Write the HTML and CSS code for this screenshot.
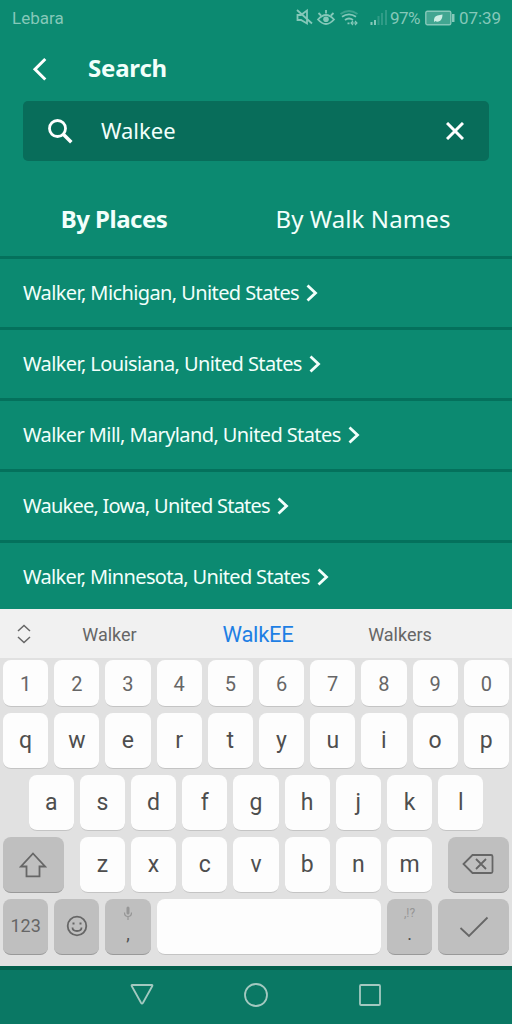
FILE: index.html
```html
<!DOCTYPE html>
<html lang="en">
<head>
<meta charset="utf-8">
<title>Search</title>
<link rel="stylesheet" href="styles.css">
</head>
<body>
<div class="screen">
  <header class="status">
    <span class="carrier">Lebara</span>
    <svg class="status-icons" width="92" height="20" viewBox="0 0 92 20" fill="none" stroke="currentColor" stroke-width="1.8">
      <path d="M1.500 7h3.500l6-4.500v13L5 12H1.500zM1 2l15 13.500"/>
      <path d="M22 11.500q8-9 16 0q-8 9-16 0zM22.500 5l2.500 2.500M30 2v3.500M37.500 5L35 7.500"/>
      <circle cx="30" cy="11.300" r="2.800" fill="currentColor" stroke="none"/>
      <path d="M44.500 6q8.500-6 17 0" opacity=".4"/>
      <path d="M46 8.800q7-5 14 0M49 12q4-3 8 0M51.500 15.300h2"/>
      <path d="M55 15h6m-4-2l-2 2 2 2m2-4l2 2-2 2" stroke-width="1.100"/>
      <path d="M75.500 17v-3M79 17v-5" stroke-width="2"/>
      <path d="M82.500 17V8M86 17V5M90 17V2" stroke-width="2" opacity=".3"/>
    </svg>
    <span class="percent">97%</span>
    <svg class="battery" width="30" height="16" viewBox="0 0 30 16">
      <rect x=".8" y="1.200" width="25" height="13.500" rx="1.500" fill="currentColor" fill-opacity=".45" stroke="currentColor" stroke-width="1.400"/>
      <path d="M27 4h2.500v8H27z" fill="currentColor"/>
      <path d="M9 11.500q-.5-5 3.500-6l5-1q0 6-4 7-2 .5-3-.5l-1.500 1z" fill="#cdeee4"/>
    </svg>
    <span class="clock">07:39</span>
  </header>

  <div class="title-bar">
    <svg width="16" height="24" viewBox="0 0 16 24"><path d="M13.300 2L3 12.300 13.300 22.500" fill="none" stroke="#fff" stroke-width="3"/></svg>
    <h1>Search</h1>
  </div>

  <div class="search-box">
    <svg width="26" height="26" viewBox="0 0 26 26" fill="none" stroke="#fff"><circle cx="10.500" cy="10.500" r="8" stroke-width="2.800"/><path d="M16.300 16.300l8 8" stroke-width="3.500"/></svg>
    <span class="query">Walkee</span>
    <svg width="18" height="18" viewBox="0 0 18 18"><path d="M1 1l16 16M17 1L1 17" stroke="#fff" stroke-width="3"/></svg>
  </div>

  <nav class="tabs">
    <span class="tab active"><b>By Places</b></span>
    <span class="tab"><span class="tab-text">By Walk Names</span></span>
  </nav>

  <main class="results">
    <div class="result"><span>Walker, Michigan, United States</span><svg class="go" viewBox="0 0 12 18"><path d="M1.500 1.500L9.500 9l-8 7.500"/></svg></div>
    <div class="result"><span>Walker, Louisiana, United States</span><svg class="go" viewBox="0 0 12 18"><path d="M1.500 1.500L9.500 9l-8 7.500"/></svg></div>
    <div class="result"><span>Walker Mill, Maryland, United States</span><svg class="go" viewBox="0 0 12 18"><path d="M1.500 1.500L9.500 9l-8 7.500"/></svg></div>
    <div class="result tightest"><span>Waukee, Iowa, United States</span><svg class="go" viewBox="0 0 12 18"><path d="M1.500 1.500L9.500 9l-8 7.500"/></svg></div>
    <div class="result tight"><span>Walker, Minnesota, United States</span><svg class="go" viewBox="0 0 12 18"><path d="M1.500 1.500L9.500 9l-8 7.500"/></svg></div>
  </main>

  <section class="keyboard">
    <div class="suggestions">
      <svg width="16" height="20" viewBox="0 0 16 20" fill="none" stroke="#666" stroke-width="1.500"><path d="M2 7l6-5.500L14 7M2 13l6 5.500 6-5.500"/></svg>
      <span>Walker</span><span class="chosen">WalkEE</span><span>Walkers</span>
    </div>
    <div class="keys">
      <div class="row digits"><kbd>1</kbd><kbd>2</kbd><kbd>3</kbd><kbd>4</kbd><kbd>5</kbd><kbd>6</kbd><kbd>7</kbd><kbd>8</kbd><kbd>9</kbd><kbd>0</kbd></div>
      <div class="row"><kbd>q</kbd><kbd>w</kbd><kbd>e</kbd><kbd>r</kbd><kbd>t</kbd><kbd>y</kbd><kbd>u</kbd><kbd>i</kbd><kbd>o</kbd><kbd>p</kbd></div>
      <div class="row inset"><kbd>a</kbd><kbd>s</kbd><kbd>d</kbd><kbd>f</kbd><kbd>g</kbd><kbd>h</kbd><kbd>j</kbd><kbd>k</kbd><kbd>l</kbd></div>
      <div class="row">
        <kbd class="dark shift"><svg width="28" height="26" viewBox="0 0 28 26"><path d="M14 1.500L26 14.500h-5.500v9.800h-13v-9.800H2z"/></svg></kbd>
        <kbd>z</kbd><kbd>x</kbd><kbd>c</kbd><kbd>v</kbd><kbd>b</kbd><kbd>n</kbd><kbd>m</kbd>
        <kbd class="dark erase"><svg width="32" height="22" viewBox="0 0 32 22"><path d="M10.500 2H29q1.500 0 1.500 1.500v15Q30.500 20 29 20H10.500L1.500 11zM14 6l10 10M24 6L14 16"/></svg></kbd>
      </div>
      <div class="row">
        <kbd class="dark numeric">123</kbd>
        <kbd class="dark"><svg width="22" height="22" viewBox="0 0 22 22"><circle cx="11" cy="11" r="9.300"/><path d="M6.500 12.500q0 3.500 4.500 3.500t4.500-3.500"/><path d="M7.500 7.500v2M14.500 7.500v2" stroke-width="2"/></svg></kbd>
        <kbd class="dark stacked"><svg class="mic" width="10" height="15" viewBox="0 0 10 15"><path d="M5 2v5" stroke-width="3" stroke-linecap="round"/><path d="M1.500 6.500q0 4 3.500 4t3.500-4M5 11v3" stroke-width="1.200"/></svg><span>,</span></kbd>
        <kbd class="space"></kbd>
        <kbd class="dark stacked"><small>,!?</small><span>.</span></kbd>
        <kbd class="dark enter"><svg width="30" height="22" viewBox="0 0 30 22"><path d="M1.500 12l8.500 8L28.500 1.500"/></svg></kbd>
      </div>
    </div>
  </section>

  <footer class="nav">
    <svg width="26" height="24" viewBox="0 0 26 24"><path d="M3.200 2h19.600q1 0 .5 1L14 19.800q-1 1.700-2 0L2.700 3q-.5-1 .5-1z"/></svg>
    <svg width="26" height="26" viewBox="0 0 26 26"><circle cx="13" cy="13" r="11"/></svg>
    <svg width="26" height="24" viewBox="0 0 26 24"><rect x="3" y="2" width="20" height="20" rx="1"/></svg>
  </footer>
</div>
</body>
</html>
```
FILE: styles.css
```css
* { box-sizing: border-box; }
body { margin: 0; background: #0c8a71; }
.screen {
  width: 512px;
  height: 1024px;
  overflow: hidden;
  display: flex;
  flex-direction: column;
  background: #0c8a71;
  color: #f2fffb;
  font-family: "Noto Sans", sans-serif;
}
.screen svg { display: block; flex: none; }
.status {
  height: 36px;
  padding: 0 11px 0 12px;
  display: flex;
  align-items: center;
  color: #85c8b9;
  font: 17px Roboto, sans-serif;
}
.carrier { letter-spacing: 0; }
.status-icons { margin-left: auto; }
.percent { margin-left: 2px; width: 31px; font-size: 17px; letter-spacing: -.6px; }
.battery { margin: 0 4px; }
.clock { font-size: 17px; width: 42px; letter-spacing: -.1px; }
.title-bar {
  height: 65px;
  padding-left: 32px;
  display: flex;
  align-items: center;
}
.title-bar h1 {
  margin: 0 0 2px 40px;
  font-size: 24px;
  font-weight: 700;
  line-height: 32px;
  letter-spacing: -.2px;
}
.search-box {
  margin: 0 23px;
  height: 60px;
  padding: 0 25px 0 24px;
  display: flex;
  align-items: center;
  border-radius: 5px;
  background: #086d5a;
}
.query { margin: 0 auto 2px 28px; font-size: 22px; letter-spacing: 0; }
.tabs { height: 95px; display: flex; padding: 20px 14px 0 0; font-size: 24px; }
.tab { flex: 0 0 228px; display: flex; justify-content: center; align-items: center; white-space: nowrap; }
.tab + .tab { flex-basis: 270px; }
.tab b { letter-spacing: -.5px; }
.tab-text { letter-spacing: .1px; }
.results { height: 353px; overflow: hidden; }
.result {
  height: 71.1px;
  padding: 0 23px;
  display: flex;
  align-items: center;
  gap: 7px;
  border-top: 3px solid #04715c;
  font-size: 20px;
  letter-spacing: -.6px;
  white-space: nowrap;
}
.result span { margin-bottom: 2px; }
.tight { letter-spacing: -.66px; }
.tightest { letter-spacing: -.75px; }
.go { width: 12px; height: 18px; fill: none; stroke: #f2fffb; stroke-width: 2.8; }
.keyboard { height: 357px; background: #e1e1e1; font-family: Roboto, sans-serif; }
.suggestions {
  height: 49px;
  padding-left: 16px;
  display: flex;
  align-items: center;
  background: #f1f1f1;
  color: #666;
  font-size: 18px;
}
.suggestions span { width: 142px; padding-top: 1px; text-align: center; }
.suggestions svg + span { width: 155px; }
.suggestions .chosen { color: #1e7fe4; font-size: 22px; letter-spacing: -.3px; }
.keys { padding: 2px 3px 0; display: flex; flex-direction: column; gap: 6px; }
.row { height: 56px; display: flex; gap: 6px; }
.digits { height: 47px; }
.inset { padding-left: 25.6px; }
kbd {
  flex: 0 0 45.2px;
  display: flex;
  align-items: center;
  justify-content: center;
  border-radius: 8px;
  border-bottom: 1px solid #c4c4c4;
  background: #fdfdfd;
  color: #4e4e4e;
  font: 23px Roboto, sans-serif;
}
.digits kbd { padding-top: 2px; font-size: 20px; color: #666; }
.dark { background: #bfbfbf; border-bottom-color: #999; }
.dark svg { fill: none; stroke: #666; stroke-width: 1.8; }
.shift { flex-basis: 61px; margin-right: 9.800px; padding-right: 1px; }
.erase { flex-basis: 61px; margin-left: 9.800px; padding-bottom: 2px; }
.dark.numeric { font-size: 18px; color: #666; }
.numeric, .numeric + .dark { padding-bottom: 2px; }
.space { flex-basis: 224.400px; }
.enter { flex-basis: 70.800px; }
.stacked { flex-direction: column; justify-content: flex-start; padding-top: 7px; }
.dark .mic { stroke: #969696; }
.stacked small { height: 15px; font-size: 12px; line-height: 15px; color: #969696; }
.stacked span { font-size: 18px; line-height: 26px; }
.nav {
  height: 58px;
  padding: 0 0 4px;
  display: flex;
  align-items: center;
  justify-content: center;
  gap: 88px;
  border-top: 4px solid #035f4c;
  background: #0a7864;
}
.nav svg { fill: none; stroke: #a3c9c0; stroke-width: 1.8; }
```
